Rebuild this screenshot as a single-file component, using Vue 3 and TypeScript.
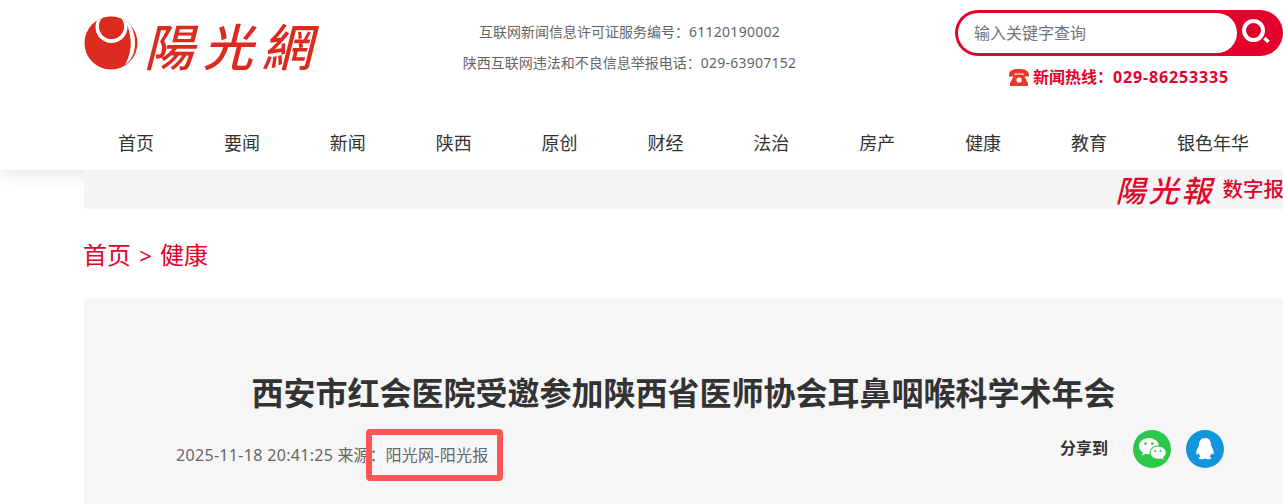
<script setup lang="ts">
const navItems = ['首页', '要闻', '新闻', '陕西', '原创', '财经', '法治', '房产', '健康', '教育', '银色年华'];
</script>

<template>
  <div class="page">
    <header class="header">
      <div class="top">
        <a class="logo">
          <svg width="54" height="54" viewBox="0 0 54 54" class="logo-mark">
            <defs>
              <clipPath id="disc"><circle cx="27" cy="27" r="26.5" /></clipPath>
            </defs>
            <circle cx="27" cy="27" r="26.5" fill="#dc2a1f" />
            <g clip-path="url(#disc)">
              <circle cx="27.5" cy="11" r="16" fill="#fff" />
              <circle cx="27.5" cy="10.5" r="12.6" fill="#dc2a1f" />
              <path d="M42 2 C50 12 53 24 50 36 C48 42 45 46 41 49 C46 40 48 30 46 20 C45 13 43 7 39 1 Z" fill="#fff" />
            </g>
          </svg>
          <span class="logo-text">陽光網</span>
        </a>
        <div class="licence">
          <p>互联网新闻信息许可证服务编号：<span class="num">61120190002</span></p>
          <p>陕西互联网违法和不良信息举报电话：<span class="num">029-63907152</span></p>
        </div>
        <div class="side">
          <div class="search">
            <span class="search-input">输入关键字查询</span>
            <span class="search-btn">
              <svg width="30" height="30" viewBox="0 0 30 30">
                <circle cx="12.5" cy="15.5" r="9.5" fill="none" stroke="#fff" stroke-width="4" />
                <path d="M23.5 23 L27.5 27" stroke="#fff" stroke-width="3.5" />
              </svg>
            </span>
          </div>
          <div class="hotline">
            <svg width="20" height="17" viewBox="0 0 20 17">
              <path d="M0 6 C0 1 5 0 10 0 C15 0 20 1 20 6 L20 7.5 L14.5 7.5 L14.5 4.6 L5.5 4.6 L5.5 7.5 L0 7.5 Z" fill="#e8392c" />
              <path d="M5 6.5 L7 5.5 L13 5.5 L15 6.5 L19 14 L19 17 L1 17 L1 14 Z" fill="#e8392c" />
              <circle cx="10" cy="11" r="2.6" fill="#fff" />
            </svg>
            <span>新闻热线：<span class="hot-num">029-86253335</span></span>
          </div>
        </div>
      </div>
      <nav class="nav">
        <a v-for="item in navItems" :key="item">{{ item }}</a>
      </nav>
    </header>

    <main class="main">
      <div class="band">
        <span class="band-logo">陽光報</span>
        <span class="band-label">数字报</span>
      </div>
      <div class="crumbs">首页 <span class="gt">&gt;</span> 健康</div>
      <article class="article">
        <h1>西安市红会医院受邀参加陕西省医师协会耳鼻咽喉科学术年会</h1>
        <div class="meta">
          <div class="info">
            <span class="date">2025-11-18 20:41:25</span><span> 来源：</span><span class="source">阳光网-阳光报</span>
            <i class="mark"></i>
          </div>
          <div class="share">
            <b>分享到</b>
            <span class="round wechat">
              <svg width="30" height="28" viewBox="0 0 30 28">
                <path d="M12 3 C6 3 2 7 2 11 C2 14 3.5 16 6 17.6 L5 20.6 L8.6 18.8 C10 19.2 11 19.3 12.6 19.2 C12 14 16 10 22 10.2 C21 6 17 3 12 3 Z" fill="#fff" />
                <path d="M21 11.4 C16.5 11.4 13.6 14.4 13.6 17.6 C13.6 21 16.8 23.8 21 23.8 C22 23.8 23 23.6 24 23.2 L26.8 24.8 L26 22.2 C27.8 21 28.8 19.4 28.8 17.6 C28.8 14.4 25.6 11.4 21 11.4 Z" fill="#fff" />
                <circle cx="8.6" cy="8.6" r="1.3" fill="#2bc84a" />
                <circle cx="15.2" cy="8.6" r="1.3" fill="#2bc84a" />
                <circle cx="18.4" cy="16" r="1.1" fill="#2bc84a" />
                <circle cx="23.6" cy="16" r="1.1" fill="#2bc84a" />
              </svg>
            </span>
            <span class="round qq">
              <svg width="24" height="26" viewBox="0 0 24 26">
                <path d="M12 2 C7.5 2 6 5.5 6 9 C6 10 5.6 10.6 5 11.6 C3.6 14 3 16 3.4 18.4 C4 19 4.8 18 5.4 17 C5.8 18.4 6.4 19.4 7.4 20.4 C6 21 5.4 21.8 6 22.6 C7 23.6 10 23.4 12 22.4 C14 23.4 17 23.6 18 22.6 C18.6 21.8 18 21 16.6 20.4 C17.6 19.4 18.2 18.4 18.6 17 C19.2 18 20 19 20.6 18.4 C21 16 20.4 14 19 11.6 C18.4 10.6 18 10 18 9 C18 5.5 16.5 2 12 2 Z" fill="#fff" />
              </svg>
            </span>
          </div>
        </div>
      </article>
    </main>
  </div>
</template>

<style>
html,
body {
  margin: 0;
  background: #fff;
  overflow: hidden;
}
</style>

<style scoped>
.page {
  width: 1283px;
  height: 504px;
  overflow: hidden;
  font-family: 'Noto Sans', 'Noto Sans CJK SC', sans-serif;
}
p,
h1 {
  margin: 0;
}
.header {
  height: 170px;
  box-shadow: 0 2px 20px rgba(0, 0, 0, 0.12);
  position: relative;
  box-sizing: border-box;
  padding-left: 84px;
}
.top {
  display: flex;
  height: 107px;
}
.logo {
  display: flex;
  width: 295px;
  padding-top: 16px;
  box-sizing: border-box;
  align-items: flex-start;
}
.logo-text {
  font-family: 'Noto Sans CJK SC', sans-serif;
  font-size: 50px;
  line-height: 54px;
  font-style: italic;
  font-weight: 500;
  letter-spacing: 9px;
  color: #dc2a1f;
  margin-left: 6px;
  margin-top: 1px;
  white-space: nowrap;
}
.licence {
  width: 576px;
  padding-top: 16px;
  box-sizing: border-box;
  font-size: 14px;
  line-height: 31px;
  color: #666;
}
.licence p {
  width: 335px;
  text-align: center;
  white-space: nowrap;
  margin-left: 83px;
}
.num {
  letter-spacing: 0.25px;
}
.side {
  width: 328px;
  flex: none;
  padding-top: 10px;
}
.search {
  height: 46px;
  border-radius: 23px;
  background: #e4002b;
  display: flex;
  box-sizing: border-box;
  padding: 3px 0 3px 3px;
}
.search-input {
  width: 279px;
  background: #fff;
  border-radius: 20px;
  font-size: 16px;
  line-height: 40px;
  padding-left: 16px;
  box-sizing: border-box;
  color: #757575;
}
.search-btn {
  flex: 1;
  padding: 2px 0 0 4px;
  box-sizing: border-box;
}
.hotline {
  display: flex;
  align-items: center;
  gap: 4px;
  padding-left: 54px;
  margin-top: 10px;
  font-size: 16px;
  line-height: 22px;
  font-weight: 700;
  color: #e4002b;
  white-space: nowrap;
}
.hot-num {
  letter-spacing: 0.85px;
}
.nav {
  display: flex;
  gap: 69.9px;
  padding-left: 34px;
  font-size: 18px;
  line-height: 26px;
  color: #333;
  white-space: nowrap;
  padding-top: 23px;
}
.main {
  padding-left: 84px;
  position: relative;
}
.band {
  height: 39px;
  background: #f5f5f5;
  display: flex;
  align-items: center;
  justify-content: flex-end;
}
.band-logo {
  font-family: 'Noto Sans CJK SC', sans-serif;
  font-size: 30px;
  font-style: italic;
  font-weight: 500;
  color: #de0a2b;
  letter-spacing: 3px;
  line-height: 39px;
  margin-right: 8px;
}
.band-label {
  font-size: 20.5px;
  line-height: 39px;
  color: #e4002b;
  font-weight: 500;
  margin-right: -1px;
}
.crumbs {
  height: 90px;
  font-size: 24px;
  line-height: 92px;
  color: #e4002b;
  white-space: nowrap;
  margin-left: -1px;
}
.gt {
  font-size: 22px;
  margin: 0 2px;
}
.article {
  background: #f6f6f6;
  height: 300px;
  width: 1199px;
  padding-top: 72px;
  box-sizing: border-box;
}
h1 {
  font-size: 32px;
  line-height: 44px;
  font-weight: 700;
  color: #333;
  text-align: center;
  white-space: nowrap;
}
.meta {
  display: flex;
  justify-content: space-between;
  margin-top: 15px;
  padding: 0 59px 0 92px;
}
.info {
  position: relative;
  font-size: 16px;
  line-height: 40px;
  color: #666;
  white-space: nowrap;
  padding-top: 5px;
}
.date {
  letter-spacing: 0.32px;
}
.source {
  letter-spacing: 0.3px;
}
.mark {
  position: absolute;
  left: 190px;
  top: -1px;
  width: 137px;
  height: 52px;
  border: 6px solid #ff5555;
  border-radius: 4px;
  box-sizing: border-box;
}
.share {
  display: flex;
  align-items: center;
  height: 38px;
  font-size: 16px;
  color: #333;
}
.share b {
  margin-right: 25px;
  margin-top: -4px;
}
.round {
  width: 38px;
  height: 38px;
  border-radius: 50%;
  display: flex;
  align-items: center;
  justify-content: center;
}
.wechat {
  background: #2bc84a;
  margin-right: 15px;
}
.qq {
  background: #1296db;
}
</style>
